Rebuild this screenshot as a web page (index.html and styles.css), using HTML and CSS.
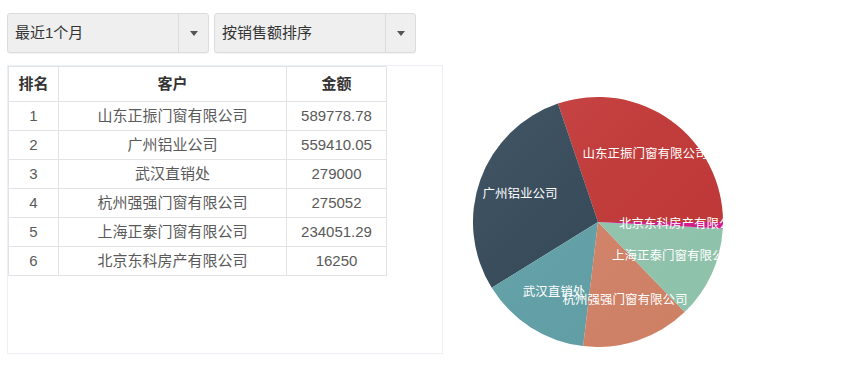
FILE: index.html
```html
<!DOCTYPE html>
<html lang="zh-CN">
<head>
    <meta charset="UTF-8">
    <title>客户销售排名</title>
    <link rel="stylesheet" href="styles.css">
</head>
<body>
    <div class="page">
        <div class="filter-row">
            <div class="dropdown">
                <span class="dropdown-text">最近1个月</span>
                <span class="dropdown-arrow"><i></i></span>
            </div>
            <div class="dropdown">
                <span class="dropdown-text">按销售额排序</span>
                <span class="dropdown-arrow"><i></i></span>
            </div>
        </div>

        <div class="main-row">
            <div class="table-panel">
                <table class="rank-table">
                    <colgroup>
                        <col class="col-rank">
                        <col class="col-name">
                        <col class="col-amount">
                    </colgroup>
                    <thead>
                        <tr>
                            <th>排名</th>
                            <th>客户</th>
                            <th>金额</th>
                        </tr>
                    </thead>
                    <tbody>
                        <tr><td>1</td><td>山东正振门窗有限公司</td><td>589778.78</td></tr>
                        <tr><td>2</td><td>广州铝业公司</td><td>559410.05</td></tr>
                        <tr><td>3</td><td>武汉直销处</td><td>279000</td></tr>
                        <tr><td>4</td><td>杭州强强门窗有限公司</td><td>275052</td></tr>
                        <tr><td>5</td><td>上海正泰门窗有限公司</td><td>234051.29</td></tr>
                        <tr><td>6</td><td>北京东科房产有限公司</td><td>16250</td></tr>
                    </tbody>
                </table>
            </div>

            <div class="pie-box">
                <svg class="pie" width="250" height="250" viewBox="0 0 250 250">
                    <defs>
                        <linearGradient id="shine" x1="0" y1="0" x2="1" y2="1">
                            <stop offset="0" stop-color="#fff" stop-opacity="0.08"/>
                            <stop offset="1" stop-color="#000" stop-opacity="0.03"/>
                        </linearGradient>
                    </defs>
                    <!-- 扇区：从 3 点钟方向逆时针 -->
                    <path d="M125 125 L250 125 A125 125 0 0 0 84.96 6.59 Z" fill="#c43837"/>
                    <path d="M125 125 L84.96 6.59 A125 125 0 0 0 18.72 190.81 Z" fill="#334859"/>
                    <path d="M125 125 L18.72 190.81 A125 125 0 0 0 110.15 249.11 Z" fill="#62a2a9"/>
                    <path d="M125 125 L110.15 249.11 A125 125 0 0 0 211.64 215.10 Z" fill="#d58468"/>
                    <path d="M125 125 L211.64 215.10 A125 125 0 0 0 249.83 131.54 Z" fill="#93c8b0"/>
                    <path d="M125 125 L249.83 131.54 A125 125 0 0 0 250 125 Z" fill="#d81b8c"/>
                    <circle cx="125" cy="125" r="125" fill="url(#shine)"/>

                    <text class="pie-label" x="172" y="57" text-anchor="middle">山东正振门窗有限公司</text>
                    <text class="pie-label" x="47" y="97" text-anchor="middle">广州铝业公司</text>
                    <text class="pie-label" x="146" y="127">北京东科房产有限公司</text>
                    <text class="pie-label" x="139" y="159">上海正泰门窗有限公司</text>
                    <text class="pie-label" x="81" y="195" text-anchor="middle">武汉直销处</text>
                    <text class="pie-label" x="152" y="203" text-anchor="middle">杭州强强门窗有限公司</text>
                </svg>
            </div>
        </div>
    </div>
</body>
</html>
```

FILE: styles.css
```css
body {
    margin: 0;
    background-color: #fff;
    font-family: 'Liberation Sans', 'Noto Sans CJK SC', sans-serif;
    font-size: 15px;
    color: #5a5a5a;
}
.page {
    padding: 13px 0 0 7px;
}
.filter-row {
    display: flex;
    gap: 5px;
}
.dropdown {
    width: 202px;
    height: 40px;
    box-sizing: border-box;
    display: flex;
    border: 1px solid #dcdcdc;
    border-radius: 3px;
    background-color: #efefef;
    box-shadow: 0 1px 1px rgba(0, 0, 0, 0.05);
}
.dropdown-text {
    flex: 1;
    padding-left: 7px;
    line-height: 38px;
    color: #333;
}
.dropdown-arrow {
    width: 29px;
    border-left: 1px solid #dcdcdc;
    display: flex;
    align-items: center;
    justify-content: center;
}
.dropdown-arrow i {
    width: 0;
    height: 0;
    border-left: 4px solid transparent;
    border-right: 4px solid transparent;
    border-top: 5px solid #555;
}
.main-row {
    display: flex;
    align-items: flex-start;
    margin-top: 12px;
}
.table-panel {
    width: 436px;
    height: 289px;
    box-sizing: border-box;
    border: 1px solid #eceff4;
}
.rank-table {
    width: 378px;
    border-collapse: collapse;
    table-layout: fixed;
}
.col-rank {
    width: 50px;
}
.col-name {
    width: 228px;
}
.col-amount {
    width: 100px;
}
.rank-table th,
.rank-table td {
    border: 1px solid #e1e3e6;
    padding: 0;
    text-align: center;
    line-height: 20px;
}
.rank-table th {
    height: 34px;
    color: #333;
    font-weight: bold;
}
.rank-table td {
    height: 28px;
}
.pie-box {
    width: 250px;
    height: 250px;
    margin: 32px 0 0 30px;
    overflow: hidden;
}
.pie {
    display: block;
}
.pie-label {
    fill: #fff;
    font-family: 'Liberation Sans', 'Noto Sans CJK SC', sans-serif;
    font-size: 12.5px;
    dominant-baseline: central;
}
```
